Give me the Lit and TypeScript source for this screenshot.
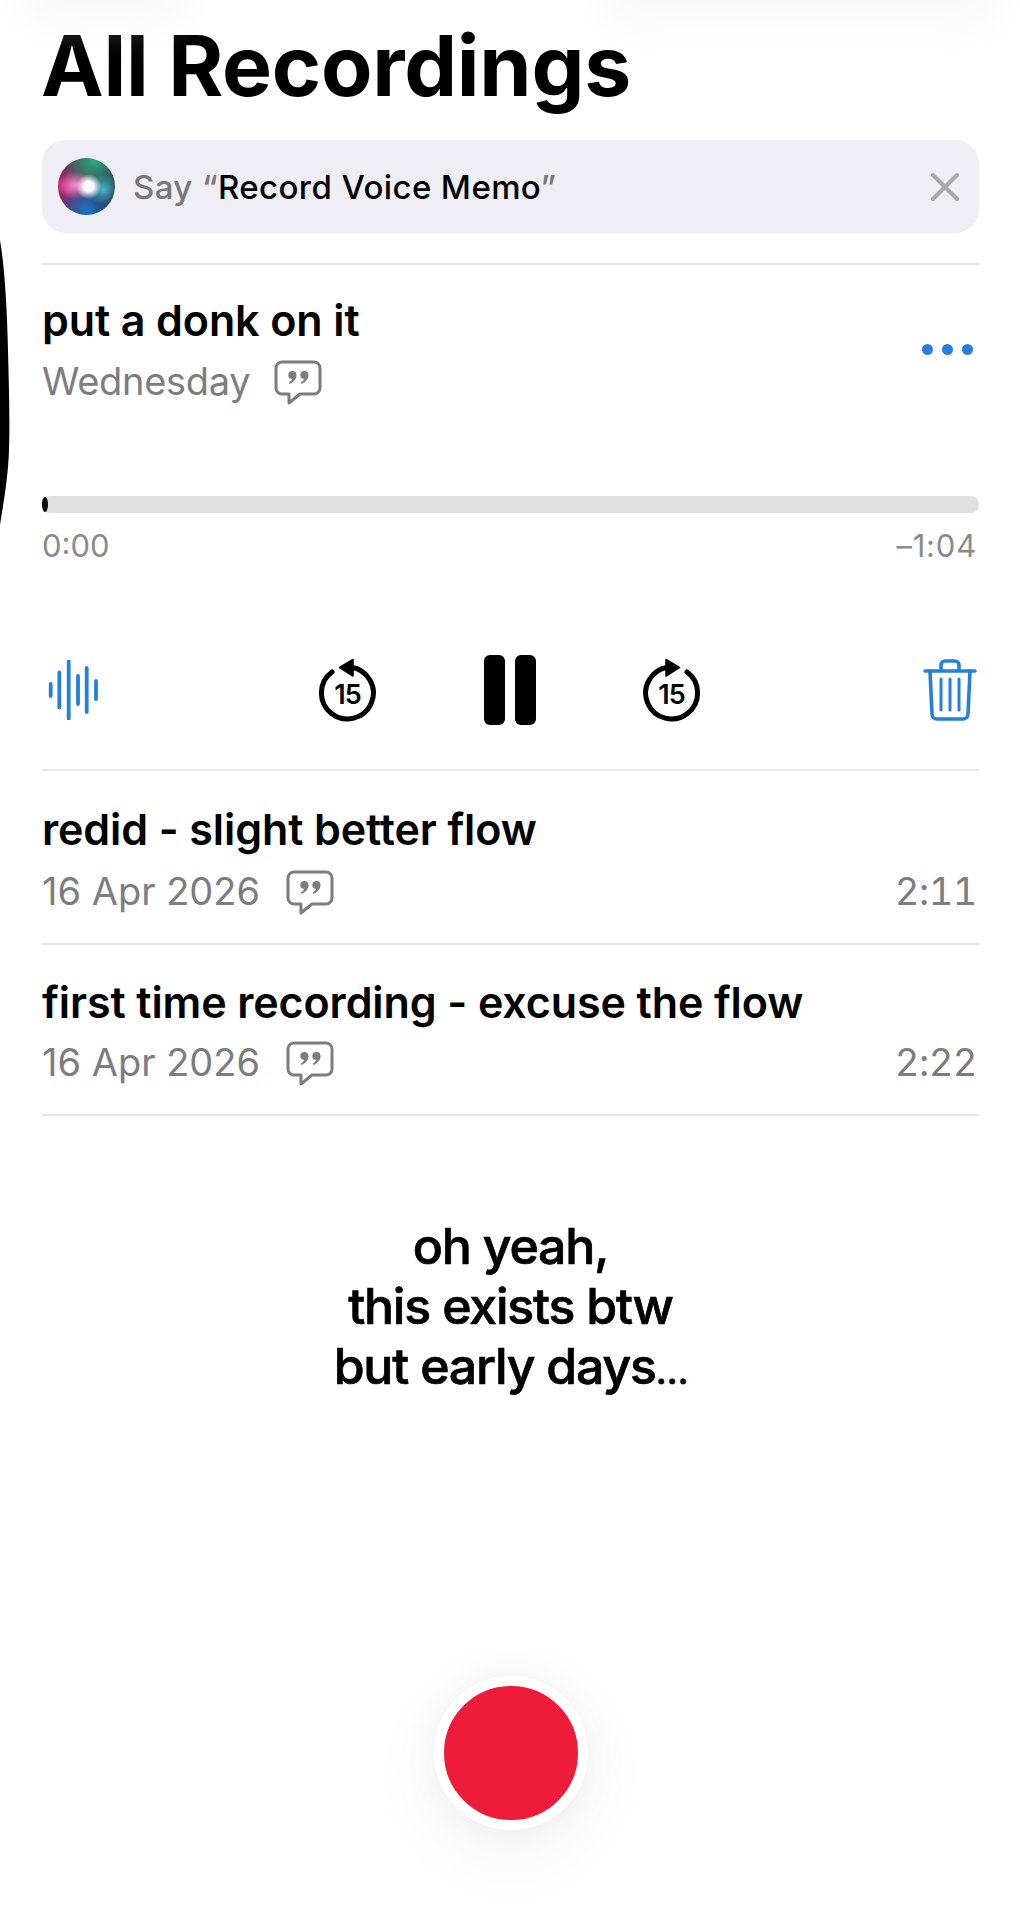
import { LitElement, html, css, svg } from "lit";
import { customElement } from "lit/decorators.js";

const bubble = html`<svg class="bubble" viewBox="0 0 48 46" aria-hidden="true">
  <path d="M8 2h32a6 6 0 0 1 6 6v20a6 6 0 0 1-6 6H26L15 43v-9H8a6 6 0 0 1-6-6V8a6 6 0 0 1 6-6z" fill="none" stroke="#7d7d7f" stroke-width="3" stroke-linejoin="round"/>
  <path d="M18.5 11a4 4 0 0 1 4 4.5c-.3 3.8-3 6.8-7 8.5l-.8-1.4c1.8-1 3-2.3 3.4-3.6a4 4 0 0 1 .4-8z" fill="#7d7d7f"/>
  <path d="M30.5 11a4 4 0 0 1 4 4.5c-.3 3.8-3 6.8-7 8.5l-.8-1.4c1.8-1 3-2.3 3.4-3.6a4 4 0 0 1 .4-8z" fill="#7d7d7f"/>
</svg>`;

// skip icon, flipped for the forward button (number stays readable)
const skip = (forward: boolean) => html`<svg class="skip" viewBox="0 0 60 66" aria-hidden="true">
  <g transform=${forward ? "translate(59 0) scale(-1 1)" : ""}>
    <path d="M14 15A26 26 0 1 0 33 10.2" fill="none" stroke="#000" stroke-width="5" stroke-linecap="round"/>
    <path d="M35 2.5v16.5L21.5 10.5z" fill="#000" stroke="#000" stroke-width="1.5" stroke-linejoin="round"/>
  </g>
  <text x="29.5" y="47" text-anchor="middle">15</text>
</svg>`;

const waveBars = [
  [2.7, 12],
  [11.3, 35],
  [20.7, 57],
  [30, 28],
  [38.7, 44],
  [48, 18],
];

const wave = html`<svg class="wave" viewBox="0 0 50 60" aria-hidden="true">
  ${waveBars.map(
    ([x, h]) =>
      svg`<line x1=${x} x2=${x} y1=${30 - h / 2} y2=${30 + h / 2} stroke="#2680d9" stroke-width="3.8" stroke-linecap="round"/>`
  )}
</svg>`;

const trash = html`<svg class="trash" viewBox="0 0 54 62" fill="none" stroke="#2680d9" stroke-width="3.6" stroke-linecap="round" stroke-linejoin="round" aria-hidden="true">
  <path d="M2 12h50"/>
  <path d="M18 11V6a4 4 0 0 1 4-4h10a4 4 0 0 1 4 4v5"/>
  <path d="M7 12l2 43a5 5 0 0 0 5 5h26a5 5 0 0 0 5-5l2-43"/>
  <path d="M18 20v31M27 20v31M36 20v31" stroke-width="3"/>
</svg>`;

@customElement("app-root")
export class AppRoot extends LitElement {
  static styles = css`
    :host {
      display: block;
      position: relative;
      width: 1020px;
      height: 1920px;
      overflow: hidden;
      background: #fff;
      color: #000;
      font-family: Inter, "Liberation Sans", sans-serif;
    }
    .page {
      padding: 0 41px 0 42px;
    }
    h1 {
      margin: 0;
      height: 140px;
      box-sizing: border-box;
      padding-top: 18px;
      margin-left: -1px;
      font-size: 84px;
      line-height: 96px;
      font-weight: 700;
      letter-spacing: -0.25px;
    }
    .banner {
      display: flex;
      align-items: center;
      height: 93px;
      box-sizing: border-box;
      padding: 0 20px 0 16px;
      border-radius: 24px;
      background: #eeeef4;
      font-size: 33px;
      font-weight: 500;
      letter-spacing: 0.4px;
    }
    .orb {
      flex: none;
      width: 57px;
      height: 57px;
      margin-right: 18px;
      border-radius: 50%;
      background:
        radial-gradient(circle at 54% 50%, #fff 0, rgba(255, 255, 255, 0.95) 12%, rgba(255, 255, 255, 0) 30%),
        radial-gradient(ellipse 34% 24% at 30% 48%, rgba(250, 150, 210, 0.95) 0, rgba(250, 150, 210, 0) 100%),
        radial-gradient(circle at 80% 55%, rgba(70, 190, 215, 0.95) 0, rgba(70, 190, 215, 0) 28%),
        radial-gradient(circle at 50% 92%, #1f74c4 0, rgba(31, 116, 196, 0) 48%),
        radial-gradient(circle at 62% 6%, #2fa87a 0, rgba(47, 168, 122, 0) 52%),
        radial-gradient(circle at 6% 50%, #c01a70 0, rgba(192, 26, 112, 0) 62%),
        #2b3348;
    }
    .say {
      color: #77777c;
    }
    .close {
      margin-left: auto;
      width: 28px;
      height: 28px;
    }
    .rule {
      height: 2px;
      background: #e5e5e7;
    }
    .banner + .rule {
      margin-top: 30px;
    }
    .name {
      font-size: 43px;
      line-height: 50px;
      font-weight: 560;
      letter-spacing: -0.1px;
    }
    .meta {
      display: flex;
      align-items: center;
      color: #7d7d7f;
      font-size: 38px;
      line-height: 46px;
      letter-spacing: 0;
    }
    .bubble {
      width: 48px;
      height: 46px;
      margin-left: 26px;
      margin-top: 4px;
    }
    .current-head {
      display: flex;
      justify-content: space-between;
      align-items: flex-start;
      height: 165px;
      box-sizing: border-box;
      padding: 30px 6px 0 0;
    }
    .current-text .meta {
      margin-top: 11px;
      letter-spacing: -0.3px;
    }
    .current-text .bubble {
      margin-left: 24px;
    }
    .dots {
      display: flex;
      gap: 9px;
      margin-top: 49px;
    }
    .dots i {
      width: 11px;
      height: 11px;
      border-radius: 50%;
      background: #2680d9;
    }
    .track {
      position: relative;
      height: 17px;
      margin-top: 66px;
      border-radius: 8px;
      background: #e0e0e0;
    }
    .knob {
      position: absolute;
      left: 0;
      top: 1px;
      width: 6px;
      height: 15px;
      border-radius: 50%;
      background: #000;
    }
    .times {
      display: flex;
      justify-content: space-between;
      margin-top: 14px;
      padding-right: 2px;
      color: #8a8a8e;
      font-size: 31px;
      line-height: 38px;
    }
    .times .left {
      letter-spacing: 0.8px;
    }
    .controls {
      display: grid;
      grid-template-columns: 60px 1fr 60px;
      align-items: center;
      height: 197px;
      box-sizing: border-box;
      margin-top: 7px;
      padding-top: 39px;
    }
    .wave {
      width: 50px;
      height: 60px;
      margin-left: 6px;
    }
    .transport {
      display: flex;
      justify-content: center;
      align-items: center;
      gap: 106px;
      margin-left: -1px;
    }
    .skip {
      width: 60px;
      height: 66px;
    }
    .skip text {
      font-family: Inter, "Liberation Sans", sans-serif;
      font-size: 27px;
      font-weight: 600;
      fill: #000;
      letter-spacing: -1px;
    }
    .pause {
      display: flex;
      gap: 10px;
    }
    .pause i {
      width: 21px;
      height: 70px;
      border-radius: 6px;
      background: #000;
    }
    .trash {
      justify-self: end;
      width: 54px;
      height: 62px;
      margin-right: 2px;
    }
    .row {
      height: 172px;
      box-sizing: border-box;
      padding-top: 33px;
    }
    .row .meta {
      margin-top: 12px;
    }
    .row + .rule + .row {
      height: 169px;
      padding-top: 32px;
    }
    .row + .rule + .row .meta {
      margin-top: 10px;
    }
    .row .dur {
      margin-left: auto;
      padding-right: 2px;
      font-variant-numeric: tabular-nums;
      letter-spacing: -0.5px;
    }
    .caption {
      margin-top: 100px;
      text-align: center;
      font-size: 50px;
      line-height: 60px;
      font-weight: 500;
      letter-spacing: -1.2px;
      -webkit-text-stroke: 0.7px #000;
    }
    .ellipsis {
      font-size: 36px;
      line-height: 0;
    }
    .record-bar {
      display: flex;
      justify-content: center;
      margin-top: 280px;
    }
    .record {
      width: 134px;
      height: 134px;
      border-radius: 50%;
      background: #ee1c3a;
      border: 10px solid #fff;
      box-shadow: 0 20px 80px rgba(0, 0, 0, 0.06), 0 0 40px rgba(0, 0, 0, 0.04);
    }
    /* stuff lying over the capture: blurred top edge and the black sliver at the left */
    .haze {
      position: absolute;
      top: -30px;
      height: 50px;
      border-radius: 25px;
      background: #ececec;
      filter: blur(20px);
      opacity: 0.45;
    }
    .haze.far-left {
      left: 20px;
      width: 170px;
    }
    .haze.right {
      left: 600px;
      width: 400px;
    }
    .sliver {
      position: absolute;
      left: 0;
      top: 240px;
      width: 10px;
      height: 290px;
    }
  `;

  private row(name: string, date: string, dur: string) {
    return html`<div class="row">
        <div class="name">${name}</div>
        <div class="meta">
          <span>${date}</span>${bubble}<span class="dur">${dur}</span>
        </div>
      </div>
      <div class="rule"></div>`;
  }

  render() {
    return html`
      <div class="haze far-left"></div>
      <div class="haze right"></div>
      <svg class="sliver" viewBox="0 0 10 290" aria-hidden="true">
        <path d="M0 0C5 30 7 70 8 110C9 150 10 180 9 210C8 240 3 265 0 285z" fill="#000"/>
      </svg>
      <div class="page">
        <h1>All Recordings</h1>
        <div class="banner">
          <div class="orb"></div>
          <span><span class="say">Say “</span>Record Voice Memo<span class="say">”</span></span>
          <svg class="close" viewBox="0 0 28 28" aria-hidden="true">
            <path d="M2 2l24 24M26 2L2 26" stroke="#a9a9ae" stroke-width="4" stroke-linecap="round"/>
          </svg>
        </div>
        <div class="rule"></div>

        <div class="current-head">
          <div class="current-text">
            <div class="name">put a donk on it</div>
            <div class="meta"><span>Wednesday</span>${bubble}</div>
          </div>
          <div class="dots"><i></i><i></i><i></i></div>
        </div>
        <div class="track"><div class="knob"></div></div>
        <div class="times"><span>0:00</span><span class="left">–1:04</span></div>
        <div class="controls">
          ${wave}
          <div class="transport">
            ${skip(false)}
            <div class="pause"><i></i><i></i></div>
            ${skip(true)}
          </div>
          ${trash}
        </div>
        <div class="rule"></div>

        ${this.row("redid - slight better flow", "16 Apr 2026", "2:11")}
        ${this.row("first time recording - excuse the flow", "16 Apr 2026", "2:22")}

        <div class="caption">oh yeah,<br />this exists btw<br />but early days<span class="ellipsis">…</span></div>
        <div class="record-bar"><div class="record"></div></div>
      </div>
    `;
  }
}
